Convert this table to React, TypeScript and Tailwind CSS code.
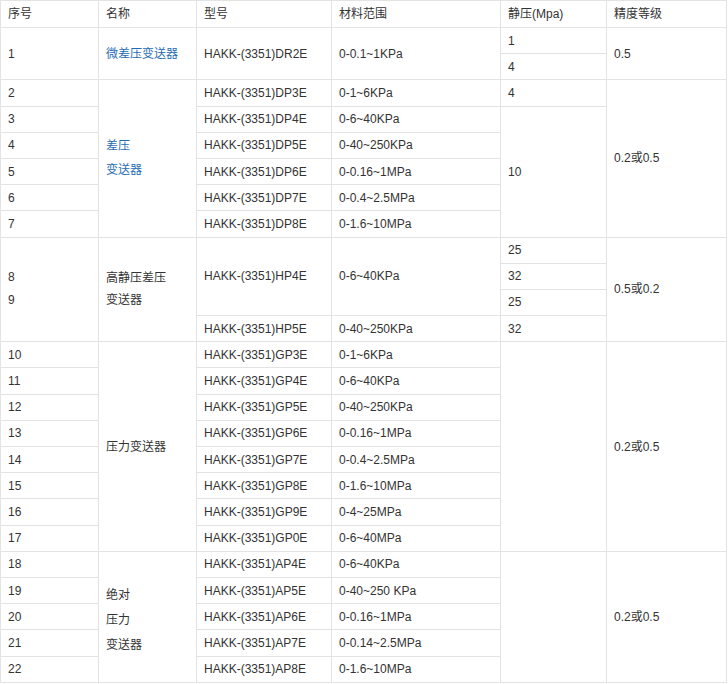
import React from 'react';

const td = 'border border-[#e3e3e3] pl-[7px] pr-1 align-middle';
const blue = 'text-[#1f6cb3]';

type GRow = { no: string; model: string; range: string };

const gauge: GRow[] = [
  { no: '10', model: 'HAKK-(3351)GP3E', range: '0-1~6KPa' },
  { no: '11', model: 'HAKK-(3351)GP4E', range: '0-6~40KPa' },
  { no: '12', model: 'HAKK-(3351)GP5E', range: '0-40~250KPa' },
  { no: '13', model: 'HAKK-(3351)GP6E', range: '0-0.16~1MPa' },
  { no: '14', model: 'HAKK-(3351)GP7E', range: '0-0.4~2.5MPa' },
  { no: '15', model: 'HAKK-(3351)GP8E', range: '0-1.6~10MPa' },
  { no: '16', model: 'HAKK-(3351)GP9E', range: '0-4~25MPa' },
  { no: '17', model: 'HAKK-(3351)GP0E', range: '0-6~40MPa' },
];

const absolute: GRow[] = [
  { no: '18', model: 'HAKK-(3351)AP4E', range: '0-6~40KPa' },
  { no: '19', model: 'HAKK-(3351)AP5E', range: '0-40~250 KPa' },
  { no: '20', model: 'HAKK-(3351)AP6E', range: '0-0.16~1MPa' },
  { no: '21', model: 'HAKK-(3351)AP7E', range: '0-0.14~2.5MPa' },
  { no: '22', model: 'HAKK-(3351)AP8E', range: '0-1.6~10MPa' },
];

const diff: GRow[] = [
  { no: '3', model: 'HAKK-(3351)DP4E', range: '0-6~40KPa' },
  { no: '4', model: 'HAKK-(3351)DP5E', range: '0-40~250KPa' },
  { no: '5', model: 'HAKK-(3351)DP6E', range: '0-0.16~1MPa' },
  { no: '6', model: 'HAKK-(3351)DP7E', range: '0-0.4~2.5MPa' },
  { no: '7', model: 'HAKK-(3351)DP8E', range: '0-1.6~10MPa' },
];

export default function App() {
  return (
    <div className="bg-white w-[728px] h-[684px] overflow-hidden font-['Liberation_Sans','Noto_Sans_CJK_SC',sans-serif] text-[12px] text-[#333]">
      <table className="border-collapse w-[726px] table-fixed leading-[24px]">
        <colgroup>
          <col className="w-[98px]" />
          <col className="w-[98px]" />
          <col className="w-[135px]" />
          <col className="w-[169px]" />
          <col className="w-[106px]" />
          <col className="w-[120px]" />
        </colgroup>
        <tbody>
          <tr className="h-[27px]">
            <td className={td}>序号</td>
            <td className={td}>名称</td>
            <td className={td}>型号</td>
            <td className={td}>材料范围</td>
            <td className={td}>静压(Mpa)</td>
            <td className={td}>精度等级</td>
          </tr>

          {/* 微差压 */}
          <tr className="h-[26.2px]">
            <td className={td} rowSpan={2}>1</td>
            <td className={`${td} ${blue}`} rowSpan={2}>微差压变送器</td>
            <td className={td} rowSpan={2}>HAKK-(3351)DR2E</td>
            <td className={td} rowSpan={2}>0-0.1~1KPa</td>
            <td className={td}>1</td>
            <td className={td} rowSpan={2}>0.5</td>
          </tr>
          <tr className="h-[26.2px]">
            <td className={td}>4</td>
          </tr>

          {/* 差压 */}
          <tr className="h-[26.2px]">
            <td className={td}>2</td>
            <td className={`${td} ${blue}`} rowSpan={6}>差压<br />变送器</td>
            <td className={td}>HAKK-(3351)DP3E</td>
            <td className={td}>0-1~6KPa</td>
            <td className={td}>4</td>
            <td className={td} rowSpan={6}>0.2或0.5</td>
          </tr>
          {diff.map((r, i) => (
            <tr key={r.no} className="h-[26.2px]">
              <td className={td}>{r.no}</td>
              <td className={td}>{r.model}</td>
              <td className={td}>{r.range}</td>
              {i === 0 && <td className={td} rowSpan={5}>10</td>}
            </tr>
          ))}

          {/* 高静压差压 */}
          <tr className="h-[26.2px]">
            <td className={`${td} leading-[23px]`} rowSpan={4}>8<br />9</td>
            <td className={`${td} leading-[22px]`} rowSpan={4}>高静压差压<br />变送器</td>
            <td className={td} rowSpan={3}>HAKK-(3351)HP4E</td>
            <td className={td} rowSpan={3}>0-6~40KPa</td>
            <td className={td}>25</td>
            <td className={td} rowSpan={4}>0.5或0.2</td>
          </tr>
          <tr className="h-[26.2px]">
            <td className={td}>32</td>
          </tr>
          <tr className="h-[26.2px]">
            <td className={td}>25</td>
          </tr>
          <tr className="h-[26.2px]">
            <td className={td}>HAKK-(3351)HP5E</td>
            <td className={td}>0-40~250KPa</td>
            <td className={td}>32</td>
          </tr>

          {/* 压力 */}
          {gauge.map((r, i) => (
            <tr key={r.no} className="h-[26.2px]">
              <td className={td}>{r.no}</td>
              {i === 0 && <td className={td} rowSpan={8}>压力变送器</td>}
              <td className={td}>{r.model}</td>
              <td className={td}>{r.range}</td>
              {i === 0 && <td className={td} rowSpan={8}></td>}
              {i === 0 && <td className={td} rowSpan={8}>0.2或0.5</td>}
            </tr>
          ))}

          {/* 绝对压力 */}
          {absolute.map((r, i) => (
            <tr key={r.no} className="h-[26.2px]">
              <td className={td}>{r.no}</td>
              {i === 0 && (
                <td className={`${td} leading-[25px] pt-[8px]`} rowSpan={5}>绝对<br />压力<br />变送器</td>
              )}
              <td className={td}>{r.model}</td>
              <td className={td}>{r.range}</td>
              {i === 0 && <td className={td} rowSpan={5}></td>}
              {i === 0 && <td className={td} rowSpan={5}>0.2或0.5</td>}
            </tr>
          ))}
        </tbody>
      </table>
    </div>
  );
}
